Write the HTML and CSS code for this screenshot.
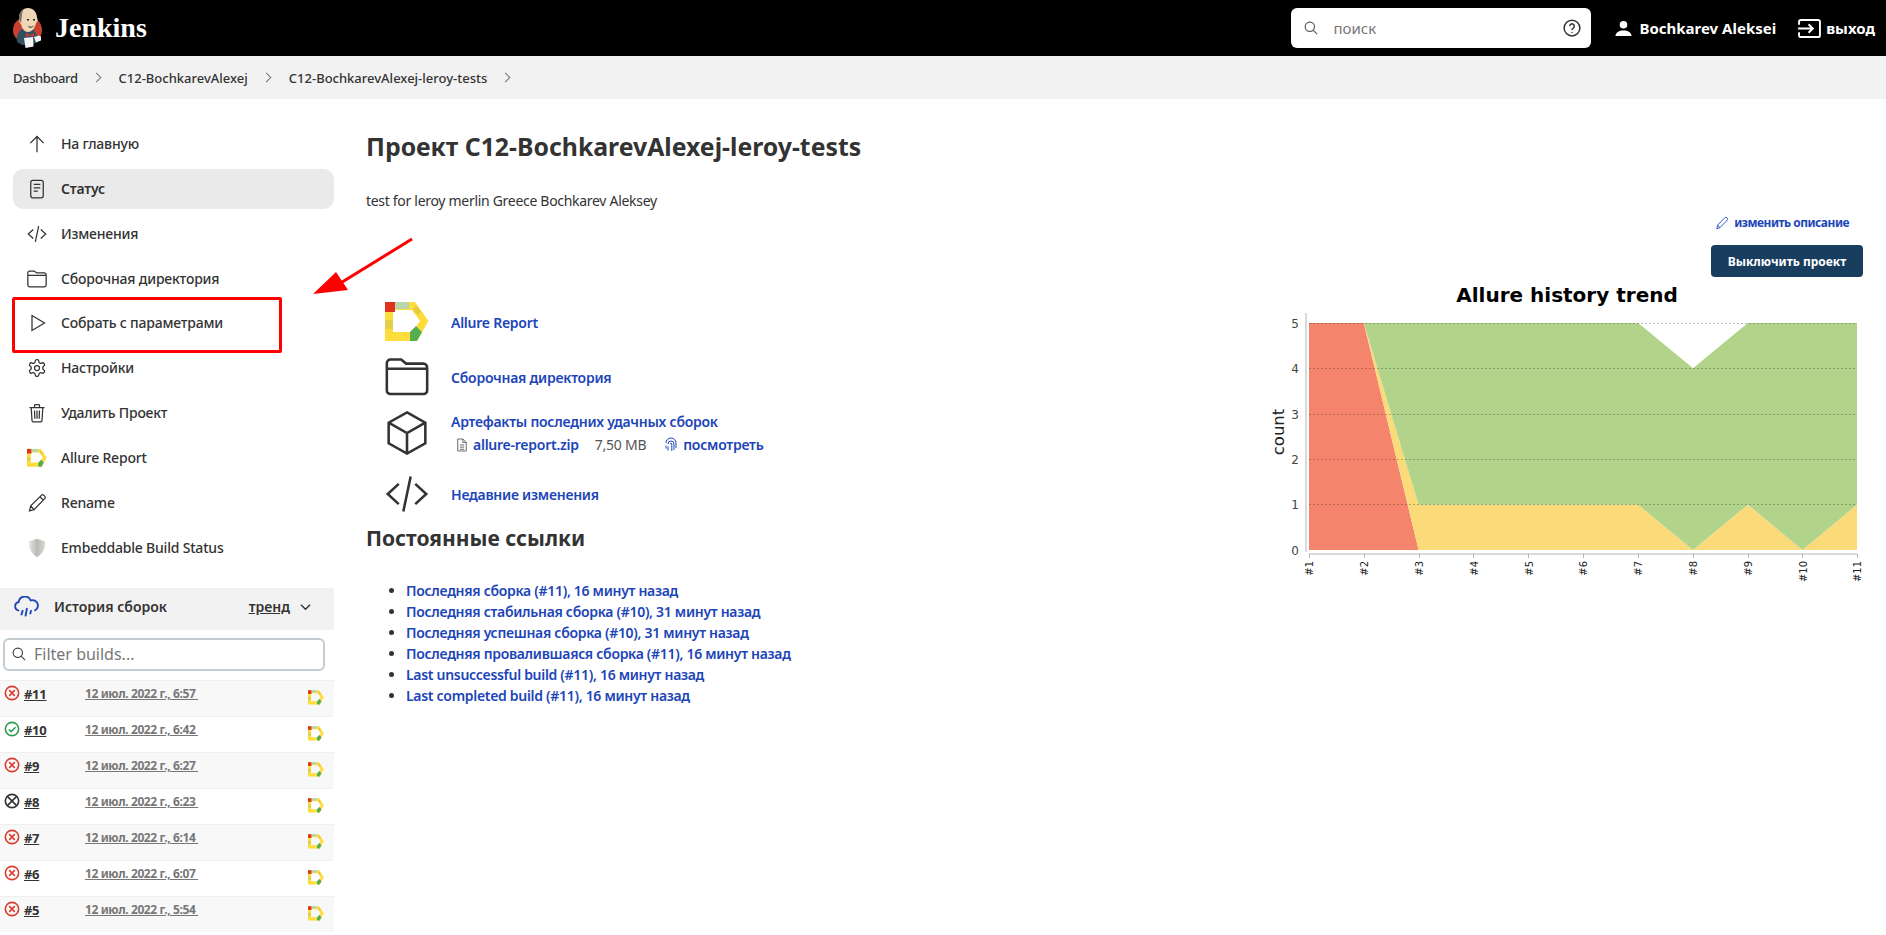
FILE: index.html
```html
<!DOCTYPE html>
<html lang="ru">
<head>
    <meta charset="UTF-8">
    <title>C12-BochkarevAlexej-leroy-tests [Jenkins]</title>
    <link rel="stylesheet" href="styles.css">
</head>
<body>
    <svg class="icon-defs" width="0" height="0">
        <symbol id="i-allure" viewBox="0 0 44 40">
            <path fill="#fddd3c" fill-rule="evenodd" d="M0 0H30L43.500 19L32 39H0ZM8 8V30H27L35 19L27 8Z"/>
            <rect fill="#e0321c" width="10" height="10"/>
            <rect fill="#b7d7a8" x="10" width="14" height="7"/>
            <path fill="#e6cb3a" d="M31 3L36 10L33 13L28 8Z"/>
            <rect fill="#e3cf48" y="18" width="8" height="9"/>
            <path fill="#54ad4f" d="M25 30L31 24L37 30L32 39H25Z"/>
        </symbol>
        <symbol id="i-code" viewBox="0 0 24 24">
            <path d="M7.500 6.500L1.500 12l6 5.500M16.500 6.500l6 5.500-6 5.500M14 2.500L10 21.500"/>
        </symbol>
        <symbol id="i-folder" viewBox="0 0 24 24">
            <path d="M3 2.500h5.800l2.700 2.200h9.500A2.500 2.500 0 0 1 23 7.200v12.100a2 2 0 0 1-2 2H3a2 2 0 0 1-2-2V4.500a2 2 0 0 1 2-2zM1 7.500h22"/>
        </symbol>
        <symbol id="i-x" viewBox="0 0 18 18">
            <circle cx="9" cy="9" r="7.500"/>
            <path d="M5.800 5.800l6.400 6.400M12.200 5.800l-6.400 6.400"/>
        </symbol>
    </svg>

    <header class="top-bar">
        <a class="brand" href="#">
            <svg class="brand-logo" viewBox="0 0 29 40">
                <ellipse cx="14.500" cy="22" rx="14.500" ry="13.500" fill="#c8402f"/>
                <path fill="#335061" d="M4 34c-1-7 2-12 6-13l10 1c3 2 5 6 4 12l-5 3H9z"/>
                <path fill="#f0d6b7" d="M6 10C6 4 10 0 15 0s9 4 9 10c1 1 1 4-1 5-1 5-4 9-8 9s-6-4-7-8c-2-1-2-4-2-6z"/>
                <path fill="#77706c" d="M6 10C6 4 10 0 15 0c-4 0-6 3-6 7l-1 8c-1-1-2-3-2-5z"/>
                <path fill="#222" d="M14 11h2v1.500h-2zM20 11h2v1.500h-2zM15 18c2 1 4 1 6-.5-1 2.500-5 3-6 .5z"/>
                <path fill="#d33833" d="M13 25l4 2 4-2v4l-4-1.500-4 1.500z"/>
                <path fill="#f4f4f4" d="M11 30l9-1 .5 9.500-8 1.500zM21 29l5-1.500 2 1v4l-5 2z"/>
            </svg>
            <span class="brand-name">Jenkins</span>
        </a>
        <div class="search-box">
            <svg class="search-icon" viewBox="0 0 24 24"><circle cx="10" cy="10" r="8"/><path d="M16 16l6.500 6.500"/></svg>
            <span class="search-hint">поиск</span>
            <svg class="help-icon" viewBox="0 0 24 24"><circle cx="12" cy="12" r="10.500"/><path d="M9 9.500a3 3 0 1 1 4.700 2.500c-1 .7-1.700 1.300-1.700 2.500"/><circle class="dot" cx="12" cy="18" r="1"/></svg>
        </div>
        <a class="user-link" href="#">
            <svg class="user-icon" viewBox="0 0 18 18"><circle cx="9" cy="5" r="4"/><path d="M0.500 17c0-4 4-6 8.500-6s8.500 2 8.500 6z"/></svg>
            Bochkarev Aleksei
        </a>
        <a class="logout-link" href="#">
            <svg class="logout-icon" viewBox="0 0 24 20"><path d="M1 6V3a2 2 0 0 1 2-2h18a2 2 0 0 1 2 2v14a2 2 0 0 1-2 2H3a2 2 0 0 1-2-2v-3M0 10h15M11 5.500l4.500 4.500-4.500 4.500"/></svg>
            выход
        </a>
    </header>

    <nav class="crumbs">
        <a href="#">Dashboard</a><span class="crumb-sep"></span>
        <a href="#">C12-BochkarevAlexej</a><span class="crumb-sep"></span>
        <a href="#">C12-BochkarevAlexej-leroy-tests</a><span class="crumb-sep"></span>
    </nav>

    <div class="page">
        <aside class="sidebar">
            <ul class="tasks">
                <li class="task"><svg class="task-icon" viewBox="0 0 24 24"><path d="M12 22V3M4 11l8-8 8 8"/></svg>На главную</li>
                <li class="task task-active"><svg class="task-icon" viewBox="0 0 24 24"><rect x="4.500" y="1.500" width="15" height="21" rx="2.500"/><path d="M8 6.500h8M8 10.500h8M8 14.500h5"/></svg>Статус</li>
                <li class="task"><svg class="task-icon"><use href="#i-code"/></svg>Изменения</li>
                <li class="task"><svg class="task-icon"><use href="#i-folder"/></svg>Сборочная директория</li>
                <li class="task"><svg class="task-icon" viewBox="0 0 24 24"><path d="M6 3l15 9-15 9z"/></svg>Собрать с параметрами</li>
                <li class="task"><svg class="task-icon" viewBox="0 0 24 24"><path d="M12.220 2h-.44a2 2 0 0 0-2 2v.18a2 2 0 0 1-1 1.730l-.43.250a2 2 0 0 1-2 0l-.15-.080a2 2 0 0 0-2.730.730l-.22.380a2 2 0 0 0 .730 2.730l.15.100a2 2 0 0 1 1 1.720v.510a2 2 0 0 1-1 1.740l-.15.090a2 2 0 0 0-.730 2.730l.22.380a2 2 0 0 0 2.730.730l.15-.080a2 2 0 0 1 2 0l.43.250a2 2 0 0 1 1 1.730V20a2 2 0 0 0 2 2h.44a2 2 0 0 0 2-2v-.18a2 2 0 0 1 1-1.730l.43-.250a2 2 0 0 1 2 0l.15.080a2 2 0 0 0 2.730-.730l.22-.39a2 2 0 0 0-.730-2.730l-.15-.080a2 2 0 0 1-1-1.740v-.5a2 2 0 0 1 1-1.740l.15-.090a2 2 0 0 0 .730-2.730l-.22-.38a2 2 0 0 0-2.730-.730l-.15.080a2 2 0 0 1-2 0l-.43-.250a2 2 0 0 1-1-1.730V4a2 2 0 0 0-2-2z"/><circle cx="12" cy="12" r="3"/></svg>Настройки</li>
                <li class="task"><svg class="task-icon" viewBox="0 0 24 24"><path d="M3 5.500h18M9 5.500V3a1 1 0 0 1 1-1h4a1 1 0 0 1 1 1v2.500M5 5.500l1 15.500a1.500 1.500 0 0 0 1.500 1.500h9A1.500 1.500 0 0 0 18 21l1-15.500M9 9l.4 10M12 9v10M15 9l-.4 10"/></svg>Удалить Проект</li>
                <li class="task"><svg class="task-icon task-icon-flat"><use href="#i-allure"/></svg>Allure Report</li>
                <li class="task"><svg class="task-icon" viewBox="0 0 24 24"><path d="M3 21.500l1.500-6L17.500 2.500c1.500-1.500 5.500 2 4 4L8.500 20zM4.500 15.500l4 4.500M15.500 4.500l4 4"/></svg>Rename</li>
                <li class="task"><svg class="task-icon task-icon-flat" viewBox="0 0 24 24"><defs><linearGradient id="shield-fill" x1="0" x2="1"><stop offset="0" stop-color="#e4e6e2"/><stop offset="0.5" stop-color="#b9bcb6"/><stop offset="1" stop-color="#d6d8d2"/></linearGradient></defs><path fill="url(#shield-fill)" d="M12 1l9.500 3c.6 9-2.500 15-9.500 19C5 19 2 13 2.500 4z"/></svg>Embeddable Build Status</li>
            </ul>

            <section class="history">
                <div class="history-head">
                    <svg class="history-icon" viewBox="0 0 24 20"><path d="M5 13.500a4.200 4.200 0 0 1-.5-8.300 6 6 0 0 1 11.500-1.500 4.800 4.800 0 0 1 3.500 9.800M8.500 13l-1.500 5M12.500 11l-1.500 8M16.500 13l-1 4"/></svg>
                    <span class="history-title">История сборок</span>
                    <a class="trend-link" href="#">тренд</a>
                    <svg class="trend-chevron" viewBox="0 0 12 8"><path d="M1 1.500l5 5 5-5"/></svg>
                </div>
                <div class="filter-box">
                    <svg class="filter-icon" viewBox="0 0 24 24"><circle cx="10" cy="10" r="8"/><path d="M16 16l6.500 6.500"/></svg>
                    Filter builds...
                </div>
                <div class="build"><svg class="build-status st-fail"><use href="#i-x"/></svg><a class="build-num" href="#">#11</a><a class="build-date" href="#">12 июл. 2022 г., 6:57&nbsp;</a><svg class="build-badge"><use href="#i-allure"/></svg></div>
                <div class="build"><svg class="build-status st-ok" viewBox="0 0 18 18"><circle cx="9" cy="9" r="7.500"/><path d="M5.500 9.500l2.500 2.500 5-5"/></svg><a class="build-num" href="#">#10</a><a class="build-date" href="#">12 июл. 2022 г., 6:42&nbsp;</a><svg class="build-badge"><use href="#i-allure"/></svg></div>
                <div class="build"><svg class="build-status st-fail"><use href="#i-x"/></svg><a class="build-num" href="#">#9</a><a class="build-date" href="#">12 июл. 2022 г., 6:27&nbsp;</a><svg class="build-badge"><use href="#i-allure"/></svg></div>
                <div class="build"><svg class="build-status st-abort" viewBox="0 0 18 18"><circle cx="9" cy="9" r="7.500"/><path d="M3.800 3.800l10.400 10.400M14.200 3.800L3.800 14.200"/></svg><a class="build-num" href="#">#8</a><a class="build-date" href="#">12 июл. 2022 г., 6:23&nbsp;</a><svg class="build-badge"><use href="#i-allure"/></svg></div>
                <div class="build"><svg class="build-status st-fail"><use href="#i-x"/></svg><a class="build-num" href="#">#7</a><a class="build-date" href="#">12 июл. 2022 г., 6:14&nbsp;</a><svg class="build-badge"><use href="#i-allure"/></svg></div>
                <div class="build"><svg class="build-status st-fail"><use href="#i-x"/></svg><a class="build-num" href="#">#6</a><a class="build-date" href="#">12 июл. 2022 г., 6:07&nbsp;</a><svg class="build-badge"><use href="#i-allure"/></svg></div>
                <div class="build"><svg class="build-status st-fail"><use href="#i-x"/></svg><a class="build-num" href="#">#5</a><a class="build-date" href="#">12 июл. 2022 г., 5:54&nbsp;</a><svg class="build-badge"><use href="#i-allure"/></svg></div>
            </section>
        </aside>

        <main class="content">
            <h1 class="job-title">Проект C12-BochkarevAlexej-leroy-tests</h1>
            <p class="job-desc">test for leroy merlin Greece Bochkarev Aleksey</p>

            <div class="columns">
                <div class="col-left">
                    <div class="link-row link-row-allure"><svg class="link-icon link-icon-flat"><use href="#i-allure"/></svg><a href="#">Allure Report</a></div>
                    <div class="link-row link-row-folder"><svg class="link-icon"><use href="#i-folder"/></svg><a href="#">Сборочная директория</a></div>
                    <div class="link-row link-row-art">
                        <svg class="link-icon" viewBox="0 0 24 24"><path d="M12 .8l10 5.600v11.200l-10 5.600-10-5.600V6.400zM2 6.400L12 12l10-5.600M12 12v11.200"/></svg>
                        <div>
                            <a href="#">Артефакты последних удачных сборок</a>
                            <div class="artifact">
                                <svg class="file-icon" viewBox="0 0 14 16"><path d="M2 1h6l4 4v10H2zM8 1v4h4M4.500 8h5M4.500 10.500h5M4.500 13h5"/></svg>
                                <a href="#">allure-report.zip</a>
                                <span class="artifact-size">7,50 MB</span>
                                <svg class="print-icon" viewBox="0 0 14 16"><path d="M2 6a5 5 0 0 1 10 0v5M4 7a3 3 0 0 1 6 0v6M6.200 7a.8.8 0 0 1 1.600 0v7M2 8.500v3M4 9.500v4"/></svg>
                                <a href="#">посмотреть</a>
                            </div>
                        </div>
                    </div>
                    <div class="link-row link-row-changes"><svg class="link-icon"><use href="#i-code"/></svg><a href="#">Недавние изменения</a></div>

                    <h2 class="perma-title">Постоянные ссылки</h2>
                    <ul class="perma-links">
                        <li><a href="#">Последняя сборка (#11), 16 минут назад</a></li>
                        <li><a href="#">Последняя стабильная сборка (#10), 31 минут назад</a></li>
                        <li><a href="#">Последняя успешная сборка (#10), 31 минут назад</a></li>
                        <li><a href="#">Последняя провалившаяся сборка (#11), 16 минут назад</a></li>
                        <li><a href="#">Last unsuccessful build (#11), 16 минут назад</a></li>
                        <li><a href="#">Last completed build (#11), 16 минут назад</a></li>
                    </ul>
                </div>

                <div class="col-right">
                    <a class="edit-desc" href="#"><svg class="edit-icon" viewBox="0 0 24 24"><path d="M3 22l1.500-6.500L17.500 2.500c1.500-1.500 5.500 2 4 4L8.500 20zM4.500 15.500l4 4.500"/></svg>изменить описание</a>
                    <button class="disable-btn">Выключить проект</button>
                    <svg class="trend-chart" viewBox="1260 283 604 300">
                        <text class="chart-title" x="1568" y="302">Allure history trend</text>
                        <path fill="#f4846b" d="M1310 323H1364.800L1419.600 550H1310Z"/>
                        <path fill="#fbda7a" d="M1364.800 323L1419.600 504.700H1639.200L1694 550L1748.800 504.700L1803.600 550L1858 504.700V550H1419.600Z"/>
                        <path fill="#b1d48a" d="M1364.800 323H1639.200L1694 368.300L1748.800 323H1858V504.700L1803.600 550L1748.800 504.700L1694 550L1639.200 504.700H1419.600Z"/>
                        <g class="chart-grid">
                            <path d="M1310 323.500H1858M1310 368.500H1858M1310 414.500H1858M1310 459.500H1858M1310 504.500H1858"/>
                        </g>
                        <path class="chart-axis" d="M1307 313V552M1310 554H1858M1310.500 554v4M1365.500 554v4M1420.500 554v4M1474.500 554v4M1529.500 554v4M1584.500 554v4M1639.500 554v4M1694.500 554v4M1749.500 554v4M1803.500 554v4M1858.500 554v4"/>
                        <g class="chart-y">
                            <text x="1296" y="328">5</text>
                            <text x="1296" y="373">4</text>
                            <text x="1296" y="419">3</text>
                            <text x="1296" y="464">2</text>
                            <text x="1296" y="509">1</text>
                            <text x="1296" y="555">0</text>
                        </g>
                        <text class="chart-count" transform="translate(1285 432) rotate(-90)">count</text>
                        <g class="chart-x">
                            <text transform="translate(1314 561) rotate(-90)">#1</text>
                            <text transform="translate(1369 561) rotate(-90)">#2</text>
                            <text transform="translate(1424 561) rotate(-90)">#3</text>
                            <text transform="translate(1479 561) rotate(-90)">#4</text>
                            <text transform="translate(1534 561) rotate(-90)">#5</text>
                            <text transform="translate(1588 561) rotate(-90)">#6</text>
                            <text transform="translate(1643 561) rotate(-90)">#7</text>
                            <text transform="translate(1698 561) rotate(-90)">#8</text>
                            <text transform="translate(1753 561) rotate(-90)">#9</text>
                            <text transform="translate(1808 561) rotate(-90)">#10</text>
                            <text transform="translate(1862 561) rotate(-90)">#11</text>
                        </g>
                    </svg>
                </div>
            </div>
        </main>
    </div>

    <!-- annotation drawn over the page -->
    <div class="callout-box"></div>
    <svg class="callout-arrow" viewBox="0 0 110 70">
        <path d="M101 2L28 47" stroke="#f00" stroke-width="3" fill="none"/>
        <path d="M2 57L37 53L25 35Z" fill="#f00"/>
    </svg>
</body>
</html>
```

FILE: styles.css
```css
body {
    margin: 0;
    font-family: "Noto Sans", Arial, sans-serif;
    font-size: 14px;
    color: #333;
    background-color: #fff;
    position: relative;
}

a {
    color: inherit;
    text-decoration: none;
}

svg {
    flex: none;
}

ul {
    margin: 0;
    padding: 0;
    list-style: none;
}

.icon-defs {
    position: absolute;
}

/* top bar */
.top-bar {
    display: flex;
    align-items: center;
    height: 56px;
    padding: 0 11px 0 13px;
    background-color: #000;
    color: #fff;
    font-weight: 700;
}

.brand {
    display: flex;
    align-items: center;
    gap: 13px;
    margin-right: auto;
}

.brand-logo {
    width: 29px;
    height: 40px;
}

.brand-name {
    font-family: "Liberation Serif", serif;
    font-size: 28px;
}

.search-box {
    display: flex;
    align-items: center;
    width: 300px;
    height: 40px;
    box-sizing: border-box;
    padding: 0 10px 0 13px;
    background-color: #fff;
    border-radius: 6px;
    color: #777;
    font-weight: 400;
    margin-right: 24px;
}

.search-icon {
    width: 14px;
    height: 14px;
    fill: none;
    stroke: #555;
    stroke-width: 2;
}

.search-hint {
    margin-left: 15px;
    font-size: 15px;
    margin-right: auto;
}

.help-icon {
    width: 18px;
    height: 18px;
    fill: none;
    stroke: #333;
    stroke-width: 2;
}

.help-icon .dot {
    fill: #333;
    stroke: none;
}

.user-link,
.logout-link {
    display: flex;
    align-items: center;
    font-size: 15px;
}

.user-link {
    gap: 7px;
    margin-right: 22px;
}

.user-icon {
    width: 17px;
    height: 17px;
    fill: #fff;
}

.logout-link {
    gap: 5px;
}

.logout-icon {
    width: 23px;
    height: 19px;
    fill: none;
    stroke: #fff;
    stroke-width: 2;
}

/* breadcrumbs */
.crumbs {
    display: flex;
    align-items: center;
    height: 43px;
    padding-left: 13px;
    background-color: #f2f2f2;
    font-size: 13px;
    font-weight: 500;
}

.crumbs a:first-child {
    letter-spacing: -0.4px;
}

.crumb-sep {
    width: 6px;
    height: 6px;
    margin: 0 19px 0 15px;
    border-top: 1px solid #777;
    border-right: 1px solid #777;
    transform: rotate(45deg);
}

/* page columns */
.page {
    display: flex;
}

.sidebar {
    flex: none;
    width: 334px;
    padding-top: 25px;
}

.tasks {
    display: flex;
    flex-direction: column;
    gap: 4.850px;
    margin-bottom: 20.350px;
}

.task {
    display: flex;
    align-items: center;
    gap: 14px;
    height: 40px;
    box-sizing: border-box;
    margin-left: 13px;
    padding: 0 0 1px 14px;
    border-radius: 10px;
    font-weight: 500;
    letter-spacing: -0.2px;
}

.task-active {
    background-color: #eaeaea;
    font-weight: 600;
}

.task-icon {
    width: 20px;
    height: 20px;
    margin-top: 1px;
    fill: none;
    stroke: #333;
    stroke-width: 1.500;
}

.task-icon-flat {
    stroke: none;
}

/* build history */
.history-head {
    display: flex;
    align-items: center;
    height: 42px;
    box-sizing: border-box;
    padding: 0 23px 4px 14px;
    background-color: #f2f2f2;
    font-weight: 600;
}

.history-icon {
    width: 25px;
    height: 22px;
    fill: none;
    stroke: #1c45b8;
    stroke-width: 1.800;
}

.history-title {
    margin-left: 15px;
    margin-right: auto;
}

.trend-link {
    text-decoration: underline;
    margin-right: 10px;
}

.trend-chevron {
    width: 11px;
    height: 8px;
    fill: none;
    stroke: #333;
    stroke-width: 1.500;
}

.filter-box {
    display: flex;
    align-items: center;
    gap: 8px;
    width: 322px;
    height: 33px;
    box-sizing: border-box;
    margin: 8px 9px 9px 3px;
    padding-left: 7px;
    border: 2px solid #c3ccd1;
    border-radius: 6px;
    color: #777;
    font-size: 16px;
}

.filter-icon {
    width: 14px;
    height: 14px;
    fill: none;
    stroke: #444;
    stroke-width: 2;
}

.build {
    display: flex;
    align-items: flex-start;
    height: 36px;
    box-sizing: border-box;
    padding: 4px 10px 0 4px;
    border-top: 1px solid #f0f0f0;
    font-weight: 700;
    font-size: 13px;
}

.build:nth-of-type(odd) {
    background-color: #f8f8f8;
}

.build-status {
    width: 16px;
    height: 16px;
    fill: none;
    stroke-width: 1.800;
}

.st-fail {
    stroke: #dc3c31;
}

.st-ok {
    stroke: #2e9e4f;
}

.st-abort {
    stroke: #333;
}

.build-num {
    width: 61px;
    margin-left: 4px;
    text-decoration: underline;
    letter-spacing: -0.3px;
}

.build-date {
    color: #777;
    text-decoration: underline;
    font-size: 12px;
    letter-spacing: -0.4px;
    margin-right: auto;
}

.build-badge {
    width: 16px;
    height: 15px;
    margin-top: 5px;
}

/* main content */
.content {
    flex: 1;
    min-width: 0;
    padding: 0 23px 0 32px;
}

.job-title {
    margin: 30px 0 0;
    font-size: 24.800px;
    line-height: 34px;
    font-weight: 700;
}

.job-desc {
    margin: 28px 0 0;
    line-height: 20px;
    letter-spacing: -0.3px;
}

.columns {
    display: flex;
    justify-content: space-between;
}

.col-left {
    padding: 0 0 0 19px;
    font-weight: 600;
    letter-spacing: -0.25px;
}

.col-left a {
    color: #1c45b8;
}

.link-row {
    display: flex;
    align-items: center;
    gap: 22px;
}

.link-row-allure {
    margin-top: 91px;
}

.link-row-folder {
    margin-top: 15px;
}

.link-row-art {
    margin-top: 15px;
}

.link-row-changes {
    margin-top: 20px;
}

.link-icon {
    width: 44px;
    height: 44px;
    margin: -2px 0;
    fill: none;
    stroke: #333;
    stroke-width: 1.400;
}

.link-icon-flat {
    stroke: none;
}

.artifact {
    display: flex;
    align-items: center;
    margin: 4px 0 0 5px;
}

.file-icon {
    width: 12px;
    height: 14px;
    margin-right: 5px;
    fill: none;
    stroke: #555;
    stroke-width: 1;
}

.artifact-size {
    margin: 0 18px 0 16px;
    color: #555;
    font-weight: 400;
}

.print-icon {
    width: 14px;
    height: 16px;
    margin-right: 5px;
    fill: none;
    stroke: #1c45b8;
    stroke-width: 1;
}

.perma-title {
    margin: 9px 0 0 -19px;
    font-size: 21px;
    line-height: 30px;
    font-weight: 700;
    color: #333;
    letter-spacing: 0;
}

.perma-links {
    margin: 27px 0 0 4px;
    padding-left: 17px;
    list-style: disc;
    letter-spacing: -0.3px;
}

.perma-links li {
    line-height: 21px;
}

.col-right {
    display: flex;
    flex-direction: column;
    align-items: flex-end;
    width: 604px;
    padding-top: 0;
}

.edit-desc {
    display: flex;
    align-items: center;
    gap: 5px;
    margin: 3px 14px 0 0;
    color: #1c45b8;
    font-size: 12px;
    font-weight: 700;
    letter-spacing: -0.5px;
}

.edit-icon {
    width: 14px;
    height: 14px;
    fill: none;
    stroke: #1c45b8;
    stroke-width: 1.500;
}

.disable-btn {
    width: 152px;
    height: 32px;
    margin-top: 14px;
    border: none;
    border-radius: 4px;
    background-color: #183d5f;
    color: #fff;
    font-family: inherit;
    font-size: 12px;
    font-weight: 700;
}

.trend-chart {
    display: block;
    width: 604px;
    height: 300px;
    margin-top: 6px;
}

.chart-title {
    font-family: "DejaVu Sans", sans-serif;
    font-size: 20px;
    font-weight: 700;
    text-anchor: middle;
    fill: #000;
}

.chart-grid {
    fill: none;
    stroke: #000;
    stroke-opacity: 0.25;
    stroke-dasharray: 2 2;
}

.chart-axis {
    fill: none;
    stroke: #b5b5b5;
}

.chart-y text {
    font-family: "DejaVu Sans", sans-serif;
    font-size: 12px;
    text-anchor: middle;
    fill: #444;
}

.chart-count {
    font-family: "DejaVu Sans", sans-serif;
    font-size: 16.500px;
    text-anchor: middle;
    fill: #222;
}

.chart-x text {
    font-family: "DejaVu Sans", sans-serif;
    font-size: 10px;
    text-anchor: end;
    fill: #222;
}

/* annotation over the screenshot */
.callout-box {
    position: absolute;
    left: 12px;
    top: 297px;
    width: 270px;
    height: 56px;
    box-sizing: border-box;
    border: 3px solid #f00;
    border-radius: 2px;
}

.callout-arrow {
    position: absolute;
    left: 311px;
    top: 237px;
    width: 110px;
    height: 70px;
}
```
